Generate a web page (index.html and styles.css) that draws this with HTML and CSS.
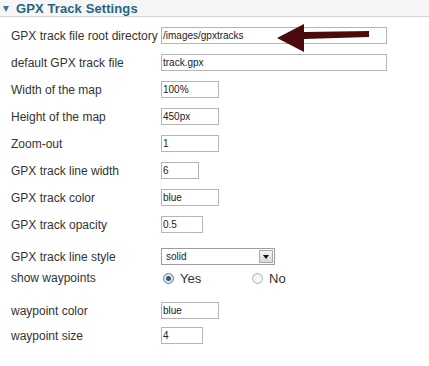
FILE: index.html
```html
<!DOCTYPE html>
<html>
<head>
<meta charset="utf-8">
<link rel="stylesheet" href="styles.css">
</head>
<body>
<div class="panel">
  <div class="header">
    <span class="caret"></span>
    <span class="title">GPX Track Settings</span>
  </div>
  <div class="rows">
    <div class="row">
      <span class="label">GPX track file root directory</span>
      <span class="input w-xl">/images/gpxtracks</span>
    </div>
    <div class="row">
      <span class="label">default GPX track file</span>
      <span class="input w-xl">track.gpx</span>
    </div>
    <div class="row">
      <span class="label">Width of the map</span>
      <span class="input w-m">100%</span>
    </div>
    <div class="row">
      <span class="label">Height of the map</span>
      <span class="input w-m">450px</span>
    </div>
    <div class="row">
      <span class="label">Zoom-out</span>
      <span class="input w-m">1</span>
    </div>
    <div class="row">
      <span class="label">GPX track line width</span>
      <span class="input w-s">6</span>
    </div>
    <div class="row">
      <span class="label">GPX track color</span>
      <span class="input w-m">blue</span>
    </div>
    <div class="row">
      <span class="label">GPX track opacity</span>
      <span class="input w-s2">0.5</span>
    </div>
    <div class="row row-select">
      <span class="label">GPX track line style</span>
      <span class="select">
        <span class="select-text">solid</span>
        <span class="select-btn"><span class="select-tri"></span></span>
      </span>
    </div>
    <div class="row row-radio">
      <span class="label">show waypoints</span>
      <span class="radios">
        <span class="radio-opt opt-yes"><span class="radio checked"><span class="dot"></span></span>Yes</span>
        <span class="radio-opt"><span class="radio"></span>No</span>
      </span>
    </div>
    <div class="row row-after-radio">
      <span class="label">waypoint color</span>
      <span class="input w-m">blue</span>
    </div>
    <div class="row row-last">
      <span class="label">waypoint size</span>
      <span class="input w-s2">4</span>
    </div>
  </div>
  <svg class="arrow" width="100" height="32" viewBox="0 0 100 32">
    <polygon points="0,14 27,0 27,8 92,7 92,13 27,15 27,28" fill="#4b0b0d"/>
  </svg>
</div>
</body>
</html>
```
FILE: styles.css
```css
html, body {
  margin: 0;
  padding: 0;
  background: #ffffff;
}
body {
  font-family: "Liberation Sans", Arial, sans-serif;
  color: #333333;
}
.panel {
  position: relative;
  width: 429px;
  height: 366px;
}
.header {
  height: 16px;
  background: #f6f6f6;
  border-bottom: 1px solid #d4d4d4;
  display: flex;
  align-items: center;
  padding-left: 3px;
}
.caret {
  width: 0;
  height: 0;
  border-left: 3.5px solid transparent;
  border-right: 3.5px solid transparent;
  border-top: 6px solid #2f7aa0;
  margin-right: 7px;
  margin-top: 1px;
}
.title {
  font-size: 13px;
  font-weight: bold;
  color: #266582;
  letter-spacing: 0.1px;
}
.rows {
  padding-top: 5px;
  display: flex;
  flex-direction: column;
}
.row {
  height: 27px;
  display: flex;
  align-items: center;
}
.label {
  width: 150px;
  padding-left: 11px;
  font-size: 12px;
  color: #333333;
  white-space: nowrap;
}
.input {
  box-sizing: border-box;
  height: 17px;
  border: 1px solid #b5b5b5;
  font-family: "Liberation Sans", Arial, sans-serif;
  font-size: 10px;
  color: #222;
  line-height: 15px;
  padding-left: 1px;
  background: #fff;
}
.w-xl { width: 226px; }
.w-m { width: 58px; }
.w-s { width: 38px; }
.w-s2 { width: 42px; }
.row-select {
  margin-top: 5px;
}
.select {
  box-sizing: border-box;
  width: 114px;
  height: 17px;
  border: 1px solid #9c9c9c;
  display: flex;
  align-items: center;
  justify-content: space-between;
  background: #fff;
}
.select-text {
  font-family: "Liberation Sans", Arial, sans-serif;
  font-size: 10px;
  color: #222;
  padding-left: 4px;
}
.select-btn {
  box-sizing: border-box;
  width: 14px;
  height: 13px;
  margin-right: 1px;
  border: 1px solid #a8a8a8;
  background: linear-gradient(#f4f4f4, #d8d8d8);
  display: flex;
  align-items: center;
  justify-content: center;
}
.select-tri {
  width: 0;
  height: 0;
  border-left: 3px solid transparent;
  border-right: 3px solid transparent;
  border-top: 4px solid #111;
}
.row-radio {
  height: 16px;
}
.radios {
  display: flex;
  align-items: center;
  font-size: 13px;
  color: #333;
}
.radio-opt {
  display: flex;
  align-items: center;
}
.opt-yes {
  width: 89px;
}
.radio {
  box-sizing: border-box;
  width: 11px;
  height: 11px;
  border-radius: 50%;
  border: 1px solid #aab4bd;
  background: radial-gradient(circle at 60% 60%, #ffffff, #e4e6e8);
  margin-left: 2px;
  margin-right: 6px;
  display: flex;
  align-items: center;
  justify-content: center;
}
.radio.checked {
  border-color: #5f7f9c;
  background: radial-gradient(circle, #e8eef3 40%, #c5d3df);
}
.dot {
  width: 5px;
  height: 5px;
  border-radius: 50%;
  background: #2e5a84;
}
.row-after-radio {
  margin-top: 11px;
}
.row-last {
  margin-top: -2px;
}
.arrow {
  position: absolute;
  left: 277px;
  top: 24px;
}
```
